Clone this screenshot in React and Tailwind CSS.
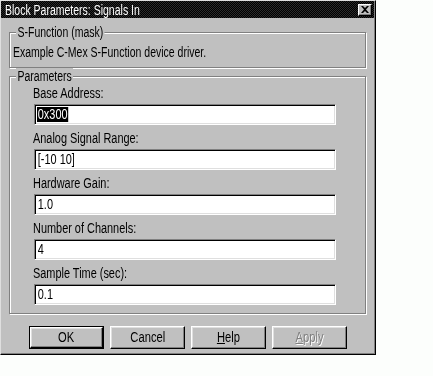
const font = "font-['Liberation_Sans',Arial,sans-serif]";

const fields = [
  { label: "Base Address:", value: "0x300", selected: true },
  { label: "Analog Signal Range:", value: "[-10 10]" },
  { label: "Hardware Gain:", value: "1.0" },
  { label: "Number of Channels:", value: "4" },
  { label: "Sample Time (sec):", value: "0.1" },
];

// narrow the Arial-metric face toward the old bitmap dialog font
const T = ({ children, className = "scale-x-[0.78]" }) => (
  <span className={`inline-block whitespace-nowrap origin-left ${className}`}>
    {children}
  </span>
);

const GroupBox = ({ title, className, children }) => (
  <div
    className={`relative ml-[8px] w-[357px] border border-[#808080] shadow-[inset_1px_1px_#fff,1px_1px_#fff] ${className}`}
  >
    <span className="absolute -top-[9px] left-[6px] leading-[16px] w-max">
      <T className="scale-x-[0.75] bg-[#c0c0c0] px-[2px]">{title}</T>
    </span>
    {children}
  </div>
);

const Field = ({ label, value, selected }) => (
  <div className="flex flex-col">
    <span className="h-[16px] leading-[16px] pl-[23px]">
      <T>{label}</T>
    </span>
    <div className="ml-[24px] mt-[3px] h-[21px] w-[302px] bg-white border border-t-[#808080] border-l-[#808080] border-r-white border-b-white shadow-[inset_1px_1px_#000,inset_-1px_-1px_#dfdfdf] flex items-center pl-[2px]">
      {selected ? (
        <T className="scale-x-[0.78] bg-black text-white leading-[15px] px-[1px]">{value}</T>
      ) : (
        <T className="scale-x-[0.78] leading-[15px] px-[1px]">{value}</T>
      )}
    </div>
  </div>
);

const Button = ({ children, def, disabled }) => (
  <div className={`h-[23px] w-[75px] ${def ? "border border-black" : ""}`}>
    <button
      className={`w-full h-full flex items-center justify-center border border-t-white border-l-white border-r-black border-b-black shadow-[inset_-1px_-1px_#808080,inset_1px_1px_#dfdfdf] ${
        disabled ? "text-[#808080] [text-shadow:1px_1px_#fff]" : "text-black"
      }`}
    >
      <span className="inline-block whitespace-nowrap scale-x-[0.8]">{children}</span>
    </button>
  </div>
);

export default function App() {
  return (
    <div className={`w-[433px] h-[376px] bg-[#fcfefc] text-[14px] text-black ${font}`}>
      <div className="w-[376px] h-[355px] bg-[#c0c0c0] border border-t-[#dfdfdf] border-l-[#dfdfdf] border-r-black border-b-black shadow-[inset_-1px_-1px_#808080]">
        <div className="mr-[1px] h-[17px] flex items-center justify-between bg-[repeating-conic-gradient(#000_0_25%,#2a2a2a_0_50%)] bg-[length:2px_2px] text-white pl-[4px] pr-[2px]">
          <span className="leading-[16px]">
            <T className="scale-x-[0.75]">Block Parameters: Signals In</T>
          </span>
          <div className="w-[14px] h-[12px] bg-[#c0c0c0] border border-t-white border-l-white border-r-black border-b-black shadow-[inset_-1px_-1px_#808080] flex items-center justify-center">
            <svg width="8" height="7" viewBox="0 0 8 7">
              <path d="M0 0h2l2 2 2-2h2L5 3.5 8 7H6L4 5 2 7H0l3-3.5z" fill="#000" />
            </svg>
          </div>
        </div>

        <GroupBox title="S-Function (mask)" className="mt-[14px] h-[36px]">
          <div className="pl-[3px] pt-[11px] leading-[16px]">
            <T className="scale-x-[0.75]">Example C-Mex S-Function device driver.</T>
          </div>
        </GroupBox>

        <GroupBox title="Parameters" className="mt-[8px] h-[238px]">
          <div className="flex flex-col gap-[5px] pt-[8px]">
            {fields.map((f) => (
              <Field key={f.label} {...f} />
            ))}
          </div>
        </GroupBox>

        <div className="mt-[12px] ml-[28px] flex gap-[6px]">
          <Button def>OK</Button>
          <Button>Cancel</Button>
          <Button>
            <span className="underline">H</span>elp
          </Button>
          <Button disabled>
            <span className="underline">A</span>pply
          </Button>
        </div>
      </div>
    </div>
  );
}
